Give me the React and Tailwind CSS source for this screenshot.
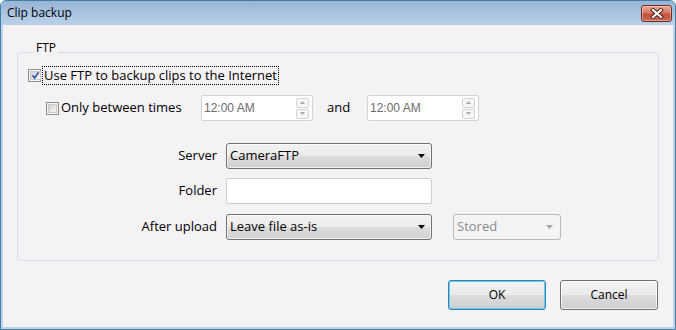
import React from "react";

const F = "font-['Open_Sans',sans-serif]";

function Checkbox({ checked }) {
  return (
    <span className="w-[13px] h-[13px] border border-[#8e8f8f] bg-[#f4f4f4] p-[1px] flex shrink-0">
      <span className="flex-1 bg-linear-to-br from-[#cdd1d6] to-[#f7f7f7] border border-[#c9c9c9] flex items-center justify-center">
        {checked && (
          <svg width="9" height="9" viewBox="0 0 9 9">
            <path d="M1.5 4.2 L3.6 7 L7.6 1.3" fill="none" stroke="#3b5aa3" strokeWidth="1.7" />
          </svg>
        )}
      </span>
    </span>
  );
}

function SpinBtn({ up }) {
  return (
    <span className="h-[10px] w-[13px] border border-[#d4d4d4] rounded-[2px] bg-[#f6f6f6] flex items-center justify-center">
      <svg width="5" height="3" viewBox="0 0 5 3">
        <path d={up ? "M0 3 L2.5 0 L5 3 Z" : "M0 0 L2.5 3 L5 0 Z"} fill="#a9a9a9" />
      </svg>
    </span>
  );
}

function TimeBox() {
  return (
    <div className="w-[112px] h-[26px] border border-[#cfd3d7] rounded-[2px] bg-white flex items-center pl-[2px] pr-[3px]">
      <span className="flex-1 text-[12px] text-[#6d6d6d] font-['Liberation_Sans',sans-serif]">12:00 AM</span>
      <div className="flex flex-col gap-[1px]">
        <SpinBtn up />
        <SpinBtn />
      </div>
    </div>
  );
}

function Arrow({ color }) {
  return (
    <svg width="7" height="4" viewBox="0 0 7 4">
      <path d="M0 0 L7 0 L3.5 4 Z" fill={color} />
    </svg>
  );
}

function Select({ text }) {
  return (
    <div className="w-[206px] h-[26px] border border-[#707070] rounded-[3px] bg-[linear-gradient(#f2f2f2,#ebebeb_50%,#dddddd_50%,#cfcfcf)] shadow-[inset_0_0_0_1px_rgba(255,255,255,0.7)] flex items-center pl-[3px] pr-[6px]">
      <span className="flex-1 text-black">{text}</span>
      <Arrow color="#000" />
    </div>
  );
}

function Button({ children, focused }) {
  return (
    <div
      className={
        "w-[98px] h-[30px] rounded-[3px] border flex items-center justify-center text-[12px] text-black bg-[linear-gradient(#f2f2f2,#ebebeb_50%,#dddddd_50%,#cfcfcf)] " +
        (focused
          ? "border-[#3c7fb1] shadow-[inset_0_0_0_1px_#5fd0f5]"
          : "border-[#707070] shadow-[inset_0_0_0_1px_rgba(255,255,255,0.75)]")
      }
    >
      {children}
    </div>
  );
}

export default function App() {
  return (
    <div className={"w-[676px] h-[330px] " + F}>
      <div className="w-full h-full flex flex-col border border-[#3f7fa8] rounded-t-[6px] bg-[#bcd3ea] overflow-hidden">
        {/* Title bar */}
        <div className="h-[24px] shrink-0 flex items-center justify-between pl-[6px] pr-[3px] bg-linear-to-b from-[#98b4d4] to-[#bad1ea]">
          <span className="text-[12px] text-black">Clip backup</span>
          <div className="w-[31px] h-[17px] rounded-[3px] border border-[#6e2b25] bg-[linear-gradient(#e9a896,#d77966_45%,#c4503f_55%,#cd6a52)] shadow-[inset_0_0_0_1px_rgba(255,255,255,0.35)] flex items-center justify-center">
            <svg width="14" height="11" viewBox="0 0 14 11">
              <path d="M3 2 L11 9 M11 2 L3 9" stroke="#4a1c18" strokeWidth="4" strokeLinecap="square" />
              <path d="M3 2 L11 9 M11 2 L3 9" stroke="#ffffff" strokeWidth="2.2" strokeLinecap="square" />
            </svg>
          </div>
        </div>
        {/* Body */}
        <div className="flex-1 px-[2px] pb-[2px] flex flex-col">
          <div className="flex-1 bg-[#f5f2f5] pt-[16px] px-[14px] flex flex-col text-[13px] text-black">
            <fieldset className="border border-[#d5dfe5] rounded-[3px] pl-[10px] pb-[20px]">
              <legend className="ml-[6px] px-[2px] leading-[14px] pb-[8px] text-[12px]">FTP</legend>
              {/* Row 1 */}
              <div className="mt-[3px] h-[19px] flex items-center">
                <Checkbox checked />
                <span className="ml-[1px] h-[19px] px-[1px] border border-dotted border-black flex items-center leading-none">
                  Use FTP to backup clips to the Internet
                </span>
              </div>
              {/* Row 2 */}
              <div className="mt-[10px] h-[26px] flex items-center">
                <div className="w-[173px] pl-[18px] flex items-center gap-[2px]">
                  <Checkbox />
                  <span>Only between times</span>
                </div>
                <TimeBox />
                <span className="w-[54px] pl-[14px]">and</span>
                <TimeBox />
              </div>
              {/* Server */}
              <div className="mt-[22px] h-[25px] flex items-center">
                <span className="w-[189px] mr-[9px] text-right">Server</span>
                <Select text="CameraFTP" />
              </div>
              {/* Folder */}
              <div className="mt-[10px] h-[26px] flex items-center">
                <span className="w-[189px] mr-[9px] text-right">Folder</span>
                <div className="w-[206px] h-[26px] border border-[#c9ced4] rounded-[2px] bg-white" />
              </div>
              {/* After upload */}
              <div className="mt-[10px] h-[26px] flex items-center">
                <span className="w-[189px] mr-[9px] text-right">After upload</span>
                <Select text="Leave file as-is" />
                <div className="ml-[21px] w-[108px] h-[26px] border border-[#b5b9bd] rounded-[3px] bg-[#f4f4f4] flex items-center pl-[3px] pr-[7px]">
                  <span className="flex-1 text-[#8b8b8b]">Stored</span>
                  <Arrow color="#a6a6a6" />
                </div>
              </div>
            </fieldset>
            <div className="mt-[19px] flex justify-end gap-[14px] pr-[1px]">
              <Button focused>OK</Button>
              <Button>Cancel</Button>
            </div>
          </div>
        </div>
      </div>
    </div>
  );
}
